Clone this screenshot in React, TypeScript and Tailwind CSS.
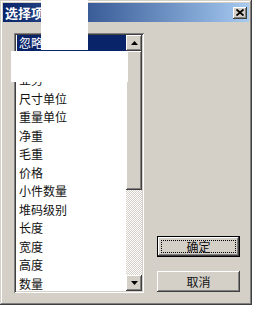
import React from "react";

const items = [
  "忽略",
  "名称",
  "业务",
  "尺寸单位",
  "重量单位",
  "净重",
  "毛重",
  "价格",
  "小件数量",
  "堆码级别",
  "长度",
  "宽度",
  "高度",
  "数量",
];

const raised =
  "bg-[#d4d0c8] shadow-[inset_-1px_-1px_#404040,inset_1px_1px_#ffffff,inset_-2px_-2px_#808080,inset_2px_2px_#d4d0c8]";

const Arrow = ({ up }: { up?: boolean }) => (
  <svg width="7" height="4" viewBox="0 0 7 4">
    {up ? <path d="M3.5 0 L7 4 L0 4 Z" fill="#000" /> : <path d="M0 0 L7 0 L3.5 4 Z" fill="#000" />}
  </svg>
);

const ScrollBar = () => (
  <div className="flex w-[16px] flex-col">
    <div className={`${raised} flex h-[16px] items-center justify-center`}>
      <Arrow up />
    </div>
    <div className={`${raised} h-[139px]`} />
    <div className="flex-1 bg-[repeating-conic-gradient(#d4d0c8_0%_25%,#ffffff_0%_50%)] bg-[length:2px_2px]" />
    <div className={`${raised} flex h-[16px] items-center justify-center`}>
      <Arrow />
    </div>
  </div>
);

const ItemList = () => (
  <div className="h-[260px] w-[130px] shadow-[inset_1px_1px_#808080,inset_-1px_-1px_#ffffff,inset_2px_2px_#404040,inset_-2px_-2px_#d4d0c8] p-[2px]">
    <div className="flex h-full bg-white">
      <div className="flex-1 overflow-hidden pl-[1px]">
        {items.map((item, i) => (
          <div key={item} className="h-[18.5px]">
            <div
              className={`flex h-[16px] items-center px-[2px] ${
                i === 0 ? "bg-[#0a246a] text-white" : "text-[#111]"
              }`}
            >
              {item}
            </div>
          </div>
        ))}
      </div>
      <ScrollBar />
    </div>
  </div>
);

export default function App() {
  return (
    <div
      className="relative h-[314px] w-[259px] bg-white text-[12px] leading-none"
      style={{ fontFamily: '"Noto Sans CJK SC", "Liberation Sans", sans-serif' }}
    >
      <div className="h-[305px] w-[252px] bg-[#d4d0c8] p-[3px] shadow-[inset_-1px_-1px_#404040,inset_1px_1px_#d4d0c8,inset_-2px_-2px_#808080,inset_2px_2px_#ffffff]">
        <div className="flex h-[19px] items-center justify-between bg-gradient-to-r from-[#0a246a] to-[#a6caf0] pl-[2px] pr-[2px]">
          <span className="text-[13px] font-bold text-white">选择项</span>
          <div className={`${raised} flex h-[12px] w-[14px] items-center justify-center`}>
            <svg width="8" height="7" viewBox="0 0 8 7">
              <path d="M0.5 0.5 L7.5 6.5 M7.5 0.5 L0.5 6.5" stroke="#000" strokeWidth="1.8" />
            </svg>
          </div>
        </div>
        <div className="mt-[11px] flex pl-[11px]">
          <ItemList />
          <div className="ml-[13px] mt-[203px] flex flex-col gap-[14px]">
            <div className="h-[21px] w-[83px] border border-black">
              <div className={`${raised} flex h-full items-center justify-center p-[3px]`}>
                <div className="flex h-full w-full items-center justify-center border border-dotted border-black text-[#111]">
                  确定
                </div>
              </div>
            </div>
            <div className={`${raised} flex h-[21px] w-[83px] items-center justify-center text-[#111]`}>取消</div>
          </div>
        </div>
      </div>
      <div className="absolute left-[41px] top-0 h-[50px] w-[47px] bg-white" />
      <div className="absolute left-[11px] top-[51px] h-[31px] w-[117px] bg-white" />
    </div>
  );
}
